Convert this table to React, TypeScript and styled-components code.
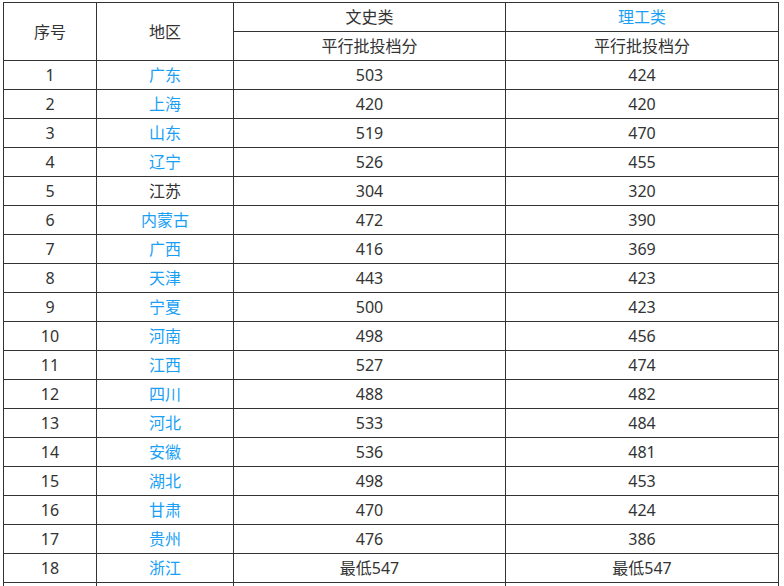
import React from "react";
import styled, { createGlobalStyle } from "styled-components";

const Global = createGlobalStyle`
  html, body { margin: 0; padding: 0; background: #fff; }
  body { font-family: "Noto Sans", "Noto Sans CJK SC", sans-serif; color: #333; }
`;

const Wrap = styled.div`
  padding: 2px 0 0 3px;
`;

const Table = styled.table`
  border-collapse: collapse;
  table-layout: fixed;
  width: 776px;
  font-size: 16px;
  color: #333;
`;

const Cell = styled.td<{ $blue?: boolean }>`
  border: 1px solid #333;
  padding: 0;
  height: 28px;
  text-align: center;
  vertical-align: middle;
  line-height: 20px;
  color: ${(p) => (p.$blue ? "#1a9ff5" : "#333")};
`;

const Row = styled.tr`
  height: 29px;
`;

const rows: [string, string, boolean, string, string][] = [
  ["1", "广东", true, "503", "424"],
  ["2", "上海", true, "420", "420"],
  ["3", "山东", true, "519", "470"],
  ["4", "辽宁", true, "526", "455"],
  ["5", "江苏", false, "304", "320"],
  ["6", "内蒙古", true, "472", "390"],
  ["7", "广西", true, "416", "369"],
  ["8", "天津", true, "443", "423"],
  ["9", "宁夏", true, "500", "423"],
  ["10", "河南", true, "498", "456"],
  ["11", "江西", true, "527", "474"],
  ["12", "四川", true, "488", "482"],
  ["13", "河北", true, "533", "484"],
  ["14", "安徽", true, "536", "481"],
  ["15", "湖北", true, "498", "453"],
  ["16", "甘肃", true, "470", "424"],
  ["17", "贵州", true, "476", "386"],
  ["18", "浙江", true, "最低547", "最低547"],
];

export default function App() {
  return (
    <>
      <Global />
      <Wrap>
        <Table>
          <colgroup>
            <col style={{ width: 93 }} />
            <col style={{ width: 137 }} />
            <col style={{ width: 272 }} />
            <col style={{ width: 273 }} />
          </colgroup>
          <tbody>
            <Row>
              <Cell rowSpan={2}>序号</Cell>
              <Cell rowSpan={2}>地区</Cell>
              <Cell>文史类</Cell>
              <Cell $blue>理工类</Cell>
            </Row>
            <Row>
              <Cell>平行批投档分</Cell>
              <Cell>平行批投档分</Cell>
            </Row>
            {rows.map(([n, region, blue, a, b]) => (
              <Row key={n}>
                <Cell>{n}</Cell>
                <Cell $blue={blue}>{region}</Cell>
                <Cell>{a}</Cell>
                <Cell>{b}</Cell>
              </Row>
            ))}
            <Row>
              <Cell />
              <Cell />
              <Cell />
              <Cell />
            </Row>
          </tbody>
        </Table>
      </Wrap>
    </>
  );
}
